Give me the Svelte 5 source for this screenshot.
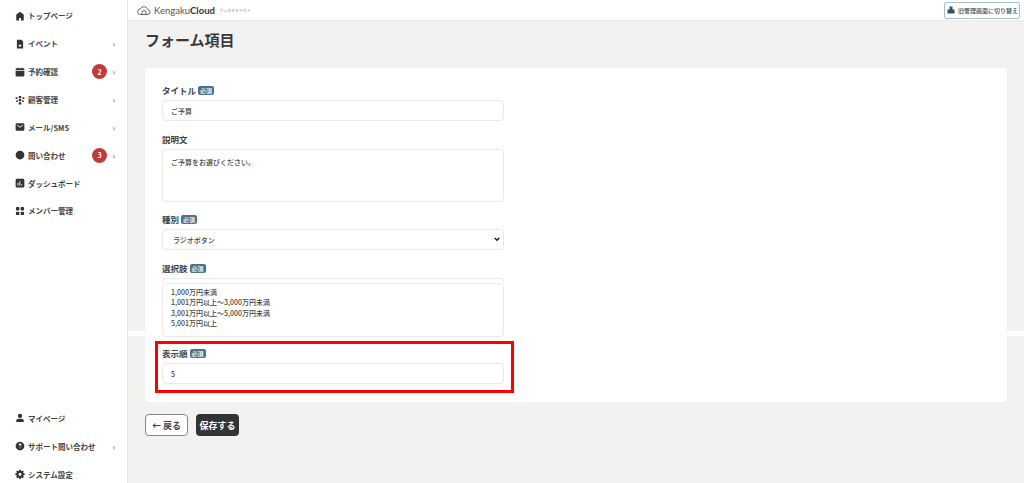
<script>
  const mainNav = [
    { label: 'トップページ', icon: 'home' },
    { label: 'イベント', icon: 'file', arrow: true },
    { label: '予約確認', icon: 'calendar', arrow: true, badge: 2 },
    { label: '顧客管理', icon: 'people', arrow: true },
    { label: 'メール/SMS', icon: 'mail', arrow: true },
    { label: '問い合わせ', icon: 'chat', arrow: true, badge: 3 },
    { label: 'ダッシュボード', icon: 'chart' },
    { label: 'メンバー管理', icon: 'grid' }
  ];
  const subNav = [
    { label: 'マイページ', icon: 'person' },
    { label: 'サポート問い合わせ', icon: 'help', arrow: true },
    { label: 'システム設定', icon: 'gear' }
  ];
  const icons = {
    home: 'M8 1 2 5.500V15h4.500v-4h3v4H14V5.500z',
    file: 'M3 1h7l3 3v11H3zM6 9v3h4V9z',
    calendar: 'M4 1h2v1h4V1h2v1h1a2 2 0 0 1 2 2v1H1V4a2 2 0 0 1 2-2h1zM1 6.500h14V13a2 2 0 0 1-2 2H3a2 2 0 0 1-2-2z',
    people: 'M6 1.500h4v3.500H6zM1 3.500h3v3H1zM12 3.500h3v3h-3zM6 6.500h4v3.500H6zM2 8.500h2.500v2.500H2zM11.500 8.500H14v2.500h-2.500zM6 11.500h4V15H6z',
    mail: 'M3 2h10a2 2 0 0 1 2 2v8a2 2 0 0 1-2 2H3a2 2 0 0 1-2-2V4a2 2 0 0 1 2-2zm0 3 5 4 5-4v-1.200L8 7.500 3 3.800z',
    chat: 'M8 1a7 7 0 1 1 0 14A7 7 0 0 1 8 1z',
    chart: 'M3 1h10a2 2 0 0 1 2 2v10a2 2 0 0 1-2 2H3a2 2 0 0 1-2-2V3a2 2 0 0 1 2-2zm1 7v4h1.500V8zm3-3v7h1.500V5zm3 5v2h1.500v-2z',
    grid: 'M3 1.500h2.500A1.500 1.500 0 0 1 7 3v2.500A1.500 1.500 0 0 1 5.500 7H3a1.500 1.500 0 0 1-1.500-1.500V3A1.500 1.500 0 0 1 3 1.500zM10.500 1.500H13A1.500 1.500 0 0 1 14.500 3v2.500A1.500 1.500 0 0 1 13 7h-2.500A1.500 1.500 0 0 1 9 5.500V3a1.500 1.500 0 0 1 1.500-1.500zM3 9h2.500A1.500 1.500 0 0 1 7 10.500V13a1.500 1.500 0 0 1-1.500 1.500H3A1.500 1.500 0 0 1 1.500 13v-2.500A1.500 1.500 0 0 1 3 9zM10.500 9H13a1.500 1.500 0 0 1 1.500 1.500V13a1.500 1.500 0 0 1-1.500 1.500h-2.500A1.500 1.500 0 0 1 9 13v-2.500A1.500 1.500 0 0 1 10.500 9z',
    person: 'M8 1a3.500 3.500 0 1 1 0 7 3.500 3.500 0 0 1 0-7zM2 12c0-2 2-3 6-3s6 1 6 3v2.500H2z',
    help: 'M8 1a7 7 0 1 1 0 14A7 7 0 0 1 8 1zM5.800 6.200h1.500c.1-.6.3-.9.800-.9s.7.3.7.700c0 .8-1.500 1-1.500 2.800h1.400c0-1.200 1.600-1.300 1.600-2.900C10.300 4.700 9.400 4 8.100 4 6.700 4 5.900 4.800 5.800 6.200zM7.300 10.200v1.500h1.500v-1.500z',
    gear: 'M6.800 1h2.400l.4 1.900 1.200.5 1.600-1 1.700 1.700-1 1.600.5 1.200 1.900.4v2.400l-1.900.4-.5 1.200 1 1.600-1.700 1.700-1.600-1-1.200.5-.4 1.900H6.800l-.4-1.900-1.200-.5-1.600 1-1.700-1.700 1-1.600-.5-1.200L.5 9.700V7.300l1.900-.4.5-1.200-1-1.600 1.700-1.700 1.600 1 1.200-.5zM8 6a2.400 2.400 0 1 0 0 4.800A2.400 2.400 0 0 0 8 6z'
  };
</script>

{#snippet navItem(item)}
  <li class="nav-item">
    <svg class="nav-icon" viewBox="0 0 16 16"><path fill-rule="evenodd" d={icons[item.icon]} /></svg>
    <span class="nav-label">{item.label}</span>
    {#if item.badge}<span class="badge">{item.badge}</span>{/if}
    {#if item.arrow}<span class="arrow">›</span>{/if}
  </li>
{/snippet}

<div class="layout">
  <aside class="sidebar">
    <ul class="nav">
      {#each mainNav as item}{@render navItem(item)}{/each}
    </ul>
    <ul class="nav">
      {#each subNav as item}{@render navItem(item)}{/each}
    </ul>
  </aside>

  <div class="stitch"></div>

  <div class="content">
    <header class="topbar">
      <div class="logo">
        <svg width="14" height="11" viewBox="0 0 28 22" fill="none" stroke="#555" stroke-width="1.800">
          <path d="M7 19a5.500 5.500 0 0 1-.5-11 8 8 0 0 1 15 1 5 5 0 0 1-1 10z" />
          <path d="M10 19v-4a4 4 0 0 1 8 0v4" />
        </svg>
        <span class="logo-text">Kengaku<b>Cloud</b></span>
        <span class="logo-kana">ケンガククラウド</span>
      </div>
      <button class="switch">
        <svg width="8" height="8" viewBox="0 0 16 16"><path fill="#2f5068" d="M5 1h6v6h4v8H1V7h4z" /></svg>
        旧管理画面に切り替え
      </button>
    </header>

    <main class="main">
      <h1>フォーム項目</h1>
      <form class="card">
        <div class="field">
          <div class="label">タイトル<span class="req">必須</span></div>
          <div class="input">ご予算</div>
        </div>
        <div class="field">
          <div class="label">説明文</div>
          <div class="input area desc">ご予算をお選びください。</div>
        </div>
        <div class="field">
          <div class="label">種別<span class="req">必須</span></div>
          <div class="input select">
            ラジオボタン
            <svg width="6" height="5" viewBox="0 0 8 6" fill="none" stroke="#222" stroke-width="2"><path d="M1 1l3 3 3-3" /></svg>
          </div>
        </div>
        <div class="field options">
          <div class="label">選択肢<span class="req">必須</span></div>
          <div class="peek"></div>
          <div class="input area list">
            1,000万円未満<br />1,001万円以上～3,000万円未満<br />3,001万円以上～5,000万円未満<br />5,001万円以上
          </div>
        </div>
        <div class="field">
          <div class="label">表示順<span class="req">必須</span></div>
          <div class="input">5</div>
        </div>
      </form>
      <div class="actions">
        <button type="button" class="btn back">← 戻る</button>
        <button type="button" class="btn save">保存する</button>
      </div>
    </main>
  </div>

  <div class="highlight"></div>
</div>

<style>
  :global(body) {
    margin: 0;
    background: #f3f2f0;
    font-family: "Noto Sans CJK JP", "Noto Sans", sans-serif;
    color: #333;
  }
  .layout {
    position: relative;
    display: flex;
    height: 483px;
    overflow: hidden;
  }
  .sidebar {
    width: 128px;
    height: 488px;
    flex-shrink: 0;
    box-sizing: border-box;
    background: #fff;
    border-right: 1px solid #e8e6e3;
    padding: 2px 0 0;
    display: flex;
    flex-direction: column;
    justify-content: space-between;
  }
  .nav {
    list-style: none;
    margin: 0;
    padding: 0;
  }
  .nav-item {
    display: flex;
    align-items: center;
    height: 27.860px;
    padding: 0 12px 0 15px;
    font-size: 7.500px;
    font-weight: 700;
    color: #444;
  }
  .nav-icon {
    width: 10px;
    height: 10px;
    margin-right: 3px;
    fill: #333;
  }
  .nav-label {
    flex: 1;
  }
  .badge {
    width: 15px;
    height: 15px;
    border-radius: 50%;
    background: #bf3b3d;
    color: #fff;
    font-size: 7px;
    font-weight: 700;
    display: flex;
    align-items: center;
    justify-content: center;
    margin-right: 3px;
  }
  .arrow {
    width: 5px;
    font-size: 8px;
    color: #888;
    text-align: right;
  }
  .content {
    position: relative;
    flex: 1;
    min-width: 0;
  }
  .topbar {
    height: 21px;
    background: #fff;
    box-sizing: border-box;
    border-bottom: 1px solid #ecebe8;
    display: flex;
    align-items: center;
    justify-content: space-between;
    padding: 0 4px 0 9px;
  }
  .logo {
    display: flex;
    align-items: center;
    gap: 3px;
  }
  .logo-text {
    font-family: "Lato", "Noto Sans", sans-serif;
    font-size: 9.500px;
    color: #555;
  }
  .logo-text b {
    color: #333;
  }
  .logo-kana {
    font-size: 3.500px;
    letter-spacing: 0.400px;
    color: #777;
    margin-left: 2px;
  }
  .switch {
    height: 17px;
    padding: 0 1px 0 2px;
    display: flex;
    align-items: center;
    gap: 3px;
    background: #fff;
    border: 1px solid #a9c0cf;
    border-radius: 2px;
    font-family: inherit;
    font-size: 6px;
    font-weight: 500;
    color: #2f5068;
  }
  .main {
    padding: 0 17px;
  }
  h1 {
    margin: 0;
    padding: 7px 0 0;
    height: 47px;
    box-sizing: border-box;
    font-size: 15px;
    line-height: 24px;
    font-weight: 700;
    color: #3a3a3a;
  }
  .card {
    background: #fff;
    border-radius: 4px;
    height: 334px;
    box-sizing: border-box;
    padding: 17px 17px 0;
  }
  .field {
    width: 342px;
    margin-bottom: 12.700px;
  }
  .label {
    display: flex;
    align-items: center;
    height: 10px;
    margin-bottom: 5px;
    font-size: 8.500px;
    font-weight: 700;
    color: #444;
  }
  .req {
    margin-left: 2px;
    padding: 0 2px;
    height: 9px;
    line-height: 9px;
    background: #4d7189;
    color: #fff;
    font-size: 6px;
    font-weight: 500;
    border-radius: 2px;
  }
  .input {
    box-sizing: border-box;
    height: 21px;
    padding: 0 8px;
    display: flex;
    align-items: center;
    background: #fff;
    border: 1px solid #ebe9e6;
    border-radius: 4px;
    font-size: 7px;
    font-weight: 500;
    color: #444;
  }
  .area {
    display: block;
    line-height: 10.300px;
  }
  .desc {
    height: 53px;
    padding-top: 7px;
  }
  .select {
    justify-content: space-between;
    padding: 0 3px 0 10px;
  }
  .options {
    margin-bottom: 11px;
  }
  .peek {
    height: 5px;
    border: 1px solid #ebe9e6;
    border-bottom: 0;
    border-radius: 4px 4px 0 0;
    box-sizing: border-box;
  }
  .list {
    height: 54px;
    padding-top: 3px;
  }
  .actions {
    display: flex;
    gap: 8px;
    margin-top: 12px;
  }
  .btn {
    height: 22px;
    border-radius: 4px;
    font-family: inherit;
    font-size: 9px;
    font-weight: 700;
    padding: 0;
  }
  .back {
    width: 43px;
    background: #fff;
    border: 1px solid #888;
    color: #444;
  }
  .save {
    width: 43px;
    background: #333;
    border: 0;
    color: #fff;
  }
  .stitch {
    position: absolute;
    left: 128px;
    right: 0;
    top: 331px;
    height: 5px;
    background: #fff;
  }
  .highlight {
    position: absolute;
    left: 155px;
    top: 341px;
    width: 359px;
    height: 52px;
    box-sizing: border-box;
    border: 3px solid #f00;
  }
</style>
